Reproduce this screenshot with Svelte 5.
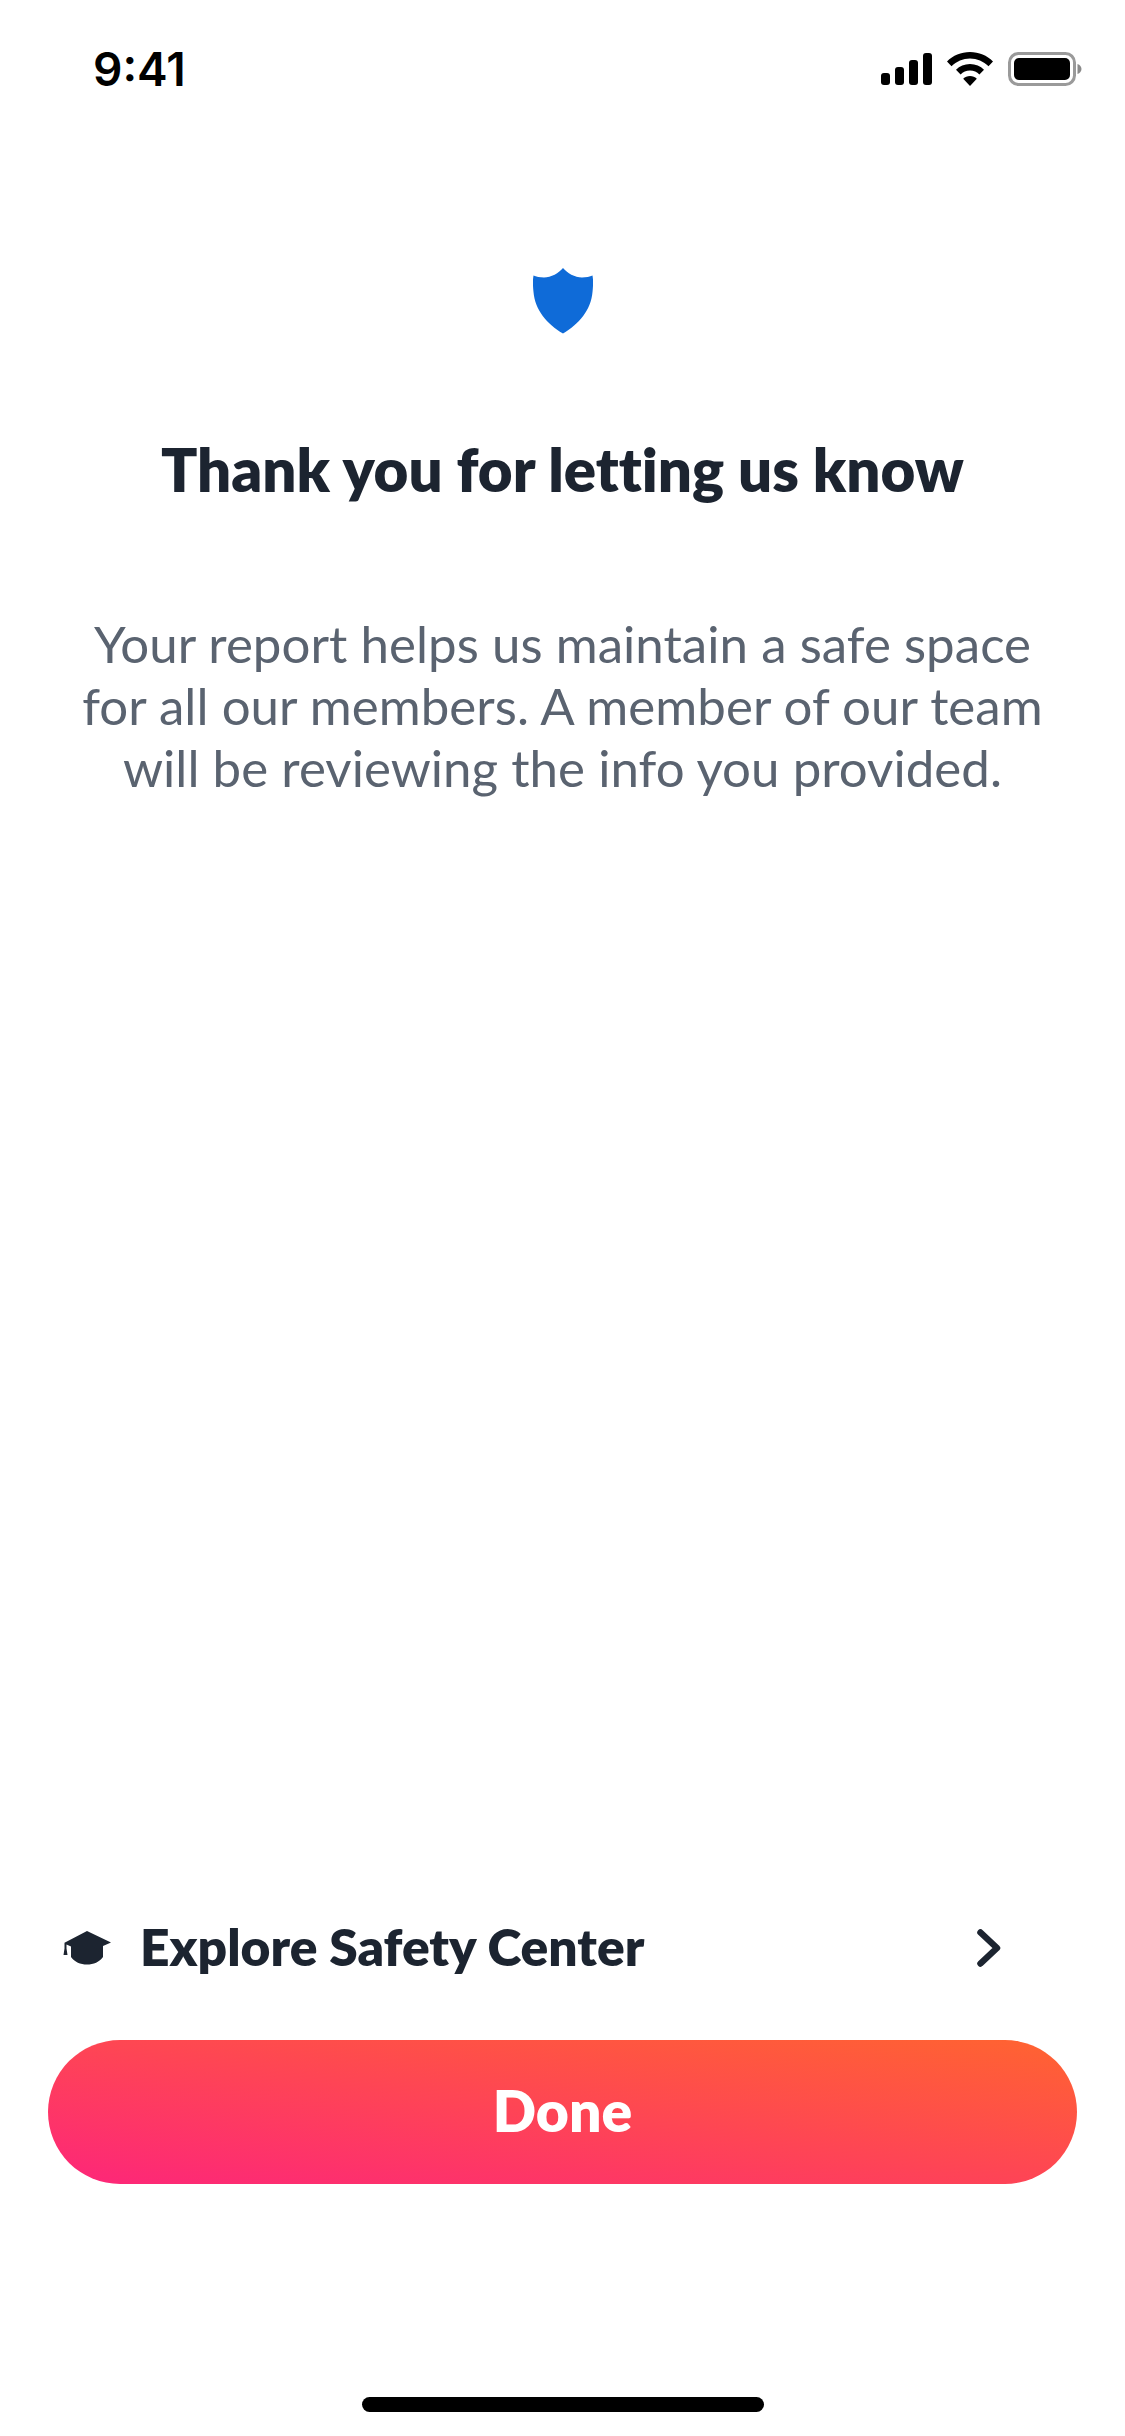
<script>
  const lines = [
    'Your report helps us maintain a safe space',
    'for all our members. A member of our team',
    'will be reviewing the info you provided.'
  ];
</script>

<div class="page">
  <header class="status">
    <span class="time">9:41</span>
    <div class="indicators">
      <svg width="51" height="32" viewBox="0 0 51 32" aria-hidden="true">
        <rect x="0" y="20" width="9" height="12" rx="3" />
        <rect x="14" y="14" width="9" height="18" rx="3" />
        <rect x="28" y="7" width="9" height="25" rx="3" />
        <rect x="42" y="0" width="9" height="32" rx="3" />
      </svg>
      <svg width="46" height="34" viewBox="0 0 46 34" aria-hidden="true">
        <path d="M23 0C14 0 6 3.500 0 9.500l4.500 4.800C9.500 9.300 16 6.500 23 6.500s13.500 2.800 18.500 7.800L46 9.500C40 3.500 32 0 23 0z" />
        <path d="M23 12c-5.500 0-10.500 2.200-14 5.800l4.600 4.800c2.400-2.500 5.700-4 9.400-4s7 1.500 9.400 4l4.600-4.800C33.500 14.200 28.500 12 23 12z" />
        <path d="M23 24c-2.700 0-5 1-6.800 2.700L23 34l6.800-7.300C28 25 25.700 24 23 24z" />
      </svg>
      <svg width="74" height="34" viewBox="0 0 74 34" aria-hidden="true">
        <rect x="1.500" y="1.500" width="65" height="31" rx="9" fill="none" stroke="#9a9a9a" stroke-width="3" />
        <rect x="6" y="6" width="56" height="22" rx="5" />
        <path d="M69.500 12c2.500.8 4 2.800 4 5s-1.500 4.200-4 5z" fill="#8a8a8a" />
      </svg>
    </div>
  </header>

  <main class="content">
    <svg class="shield" width="60" height="66" viewBox="0 0 60 66" aria-hidden="true">
      <path d="M30 0C34 5 42 9.500 49 9.500c4 0 8-.8 10.500-2C60.500 13 60 19 59.500 24 58 42 46 56 30 65.500 14 56 2 42 .5 24 0 19-.5 13 .5 7.500 3 8.700 7 9.500 11 9.500c7 0 15-4.500 19-9.500z" />
    </svg>
    <h1>Thank you for letting us know</h1>
    <p>
      {#each lines as line}
        <span>{line}</span>
      {/each}
    </p>
  </main>

  <footer class="actions">
    <div class="link">
      <svg class="cap" width="50" height="34" viewBox="0 0 50 34" aria-hidden="true">
        <path d="M25 0 49 11.500 41 15V26c-3.500 5-9.500 7.500-16 7.500S12.500 31 9 26V15.500L4.500 13.500V17.500L5.500 24H1.500L2.500 17.500V11.800z" />
      </svg>
      <span class="label">Explore Safety Center</span>
      <svg class="chev" width="24" height="38" viewBox="0 0 24 38" aria-hidden="true">
        <path d="M3.500 3.500 20 19 3.500 34.500" />
      </svg>
    </div>
    <button type="button">Done</button>
  </footer>

  <div class="home"></div>
</div>

<style>
  :global(body) {
    margin: 0;
    background: #fff;
  }
  .page {
    width: 1125px;
    height: 2436px;
    display: flex;
    flex-direction: column;
    font-family: Lato, "Liberation Sans", sans-serif;
    font-variant-ligatures: none;
    color: #1c2430;
    background: #fff;
  }
  .status {
    height: 140px;
    box-sizing: border-box;
    padding: 42px 43px 0 93px;
    display: flex;
    justify-content: space-between;
    align-items: flex-start;
  }
  .time {
    font: 600 46px/54px Inter, "Liberation Sans", sans-serif;
    color: #000;
  }
  .indicators {
    display: flex;
    align-items: center;
    gap: 15px;
    padding-top: 10px;
  }
  .content {
    flex: 1;
    display: flex;
    flex-direction: column;
    align-items: center;
    padding-top: 128px;
  }
  .shield {
    fill: #0f6bd8;
  }
  h1 {
    margin: 100px 0 0;
    font-size: 60px;
    line-height: 70px;
    font-weight: 800;
    text-align: center;
  }
  p {
    margin: 109px 0 0;
    font-size: 51px;
    line-height: 62px;
    font-weight: 400;
    letter-spacing: 0.05px;
    color: #5a6370;
    text-align: center;
  }
  p span {
    display: block;
  }
  .actions {
    padding: 0 48px;
    display: flex;
    flex-direction: column;
  }
  .link {
    display: flex;
    align-items: center;
    padding: 0 76px 0 14px;
    height: 100px;
  }
  .cap {
    fill: #1c2430;
    margin-right: 28px;
  }
  .label {
    flex: 1;
    font-size: 51.500px;
    font-weight: 800;
    line-height: 96px;
    height: 100px;
  }
  .chev {
    fill: none;
    stroke: #1c2430;
    stroke-width: 6.500;
    stroke-linecap: round;
    stroke-linejoin: round;
  }
  button {
    margin-top: 42px;
    height: 144px;
    padding: 0 0 4px;
    border: 0;
    border-radius: 72px;
    background: linear-gradient(to top right, #fd2679, #ff6430);
    color: #fff;
    font: 800 57px/1 Lato, "Liberation Sans", sans-serif;
  }
  .home {
    width: 402px;
    height: 15px;
    border-radius: 8px;
    background: #000;
    margin: 213px auto 24px;
    flex: none;
  }
</style>
